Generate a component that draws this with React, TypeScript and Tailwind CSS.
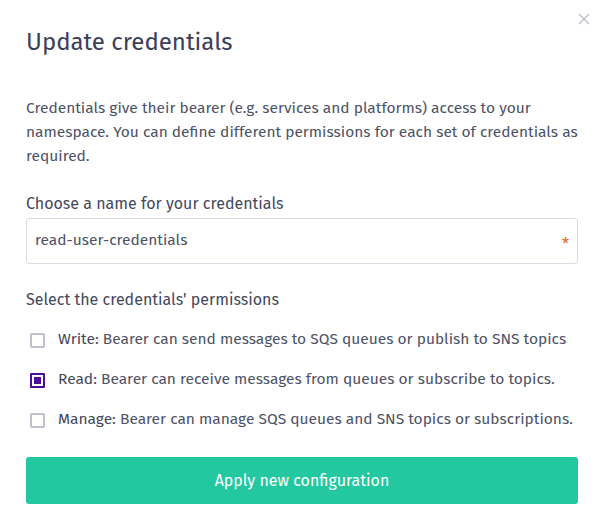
import React from "react";

const font = { fontFamily: '"Fira Sans", Lato, "Open Sans", sans-serif' };

function Box({ checked }: { checked?: boolean }) {
  return checked ? (
    <span className="w-[15px] h-[15px] shrink-0 border-2 border-[#4a0e9e] rounded-[1px] flex items-center justify-center">
      <span className="w-[7px] h-[7px] bg-[#4a0e9e]" />
    </span>
  ) : (
    <span className="w-[15px] h-[15px] shrink-0 border-2 border-[#bfc1cc] rounded-[2px]" />
  );
}

export default function App() {
  const rows = [
    { k: "Write:", t: "Bearer can send messages to SQS queues or publish to SNS topics", c: false },
    { k: "Read:", t: "Bearer can receive messages from queues or subscribe to topics.", c: true },
    { k: "Manage:", t: "Bearer can manage SQS queues and SNS topics or subscriptions.", c: false },
  ];
  return (
    <div className="w-[602px] h-[527px] bg-white relative text-[#4d5266]" style={font}>
      <button className="absolute right-[12px] top-[13px] w-[12px] h-[12px] flex items-center justify-center">
        <svg width="12" height="12" viewBox="0 0 12 12">
          <path d="M1 1L11 11M11 1L1 11" stroke="#b9bdc9" strokeWidth="1.4" />
        </svg>
      </button>
      <div className="pl-[26px] pr-[24px] pt-[26px]">
        <h1 className="text-[24px] leading-[32px] text-[#3b4057]">Update credentials</h1>
        <p className="mt-[38px] text-[15.5px] leading-[24px]">
          Credentials give their bearer (e.g. services and platforms) access to your namespace. You can define different permissions for each set of credentials as required.
        </p>
        <label className="block mt-[24px] text-[16px] leading-[24px] text-[#43485c]">Choose a name for your credentials</label>
        <div className="mt-[2px] h-[46px] border border-[#d9dbe6] rounded-[3px] flex items-center justify-between pl-[8px] pr-[8px]">
          <span className="text-[15.5px]">read-user-credentials</span>
          <span className="text-[#e0622c] text-[16px] translate-y-[4px]">*</span>
        </div>
        <div className="mt-[24px] text-[16px] leading-[24px] text-[#43485c]">Select the credentials' permissions</div>
        <div className="mt-[16px] flex flex-col gap-[16px] pl-[4px]">
          {rows.map((r) => (
            <div key={r.k} className="flex items-center gap-[13px] h-[24px] text-[15.5px] whitespace-nowrap">
              <Box checked={r.c} />
              <span>
                <span className="text-[#43485c]">{r.k}</span> {r.t}
              </span>
            </div>
          ))}
        </div>
        <button className="mt-[25px] w-full h-[47px] rounded-[3px] bg-[#23c8a0] text-white text-[16px]">
          Apply new configuration
        </button>
      </div>
    </div>
  );
}
